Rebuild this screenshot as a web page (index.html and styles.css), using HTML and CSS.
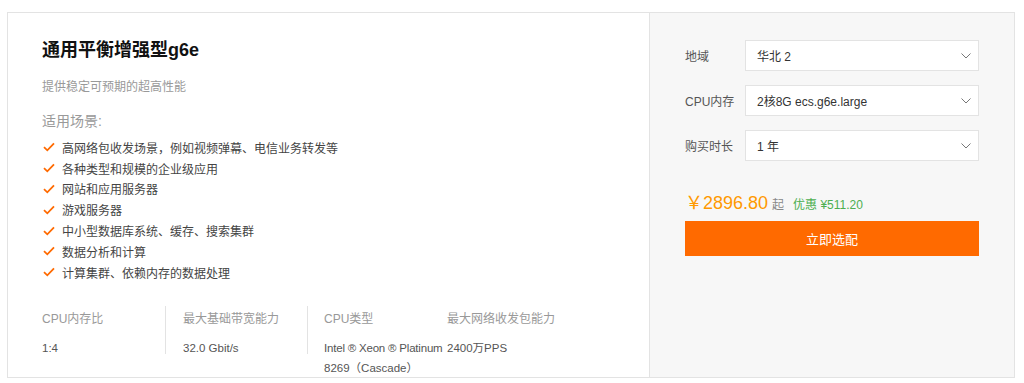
FILE: index.html
```html
<!DOCTYPE html>
<html lang="zh-CN">
<head>
<meta charset="utf-8">
<title>通用平衡增强型g6e</title>
<link rel="stylesheet" href="styles.css">
</head>
<body>
<div class="card">
  <div class="info">
    <h1 class="title">通用平衡增强型g6e</h1>
    <p class="subtitle">提供稳定可预期的超高性能</p>
    <p class="scene-title">适用场景:</p>
    <ul class="scenes">
      <li><svg class="check" viewBox="0 0 12 10"><path d="M1 5.2 L4.3 8.3 L11 1.4" /></svg>高网络包收发场景，例如视频弹幕、电信业务转发等</li>
      <li><svg class="check" viewBox="0 0 12 10"><path d="M1 5.2 L4.3 8.3 L11 1.4" /></svg>各种类型和规模的企业级应用</li>
      <li><svg class="check" viewBox="0 0 12 10"><path d="M1 5.2 L4.3 8.3 L11 1.4" /></svg>网站和应用服务器</li>
      <li><svg class="check" viewBox="0 0 12 10"><path d="M1 5.2 L4.3 8.3 L11 1.4" /></svg>游戏服务器</li>
      <li><svg class="check" viewBox="0 0 12 10"><path d="M1 5.2 L4.3 8.3 L11 1.4" /></svg>中小型数据库系统、缓存、搜索集群</li>
      <li><svg class="check" viewBox="0 0 12 10"><path d="M1 5.2 L4.3 8.3 L11 1.4" /></svg>数据分析和计算</li>
      <li><svg class="check" viewBox="0 0 12 10"><path d="M1 5.2 L4.3 8.3 L11 1.4" /></svg>计算集群、依赖内存的数据处理</li>
    </ul>
    <div class="specs">
      <div class="spec spec-1">
        <div class="spec-label">CPU内存比</div>
        <div class="spec-value">1:4</div>
      </div>
      <div class="spec spec-2">
        <div class="spec-label">最大基础带宽能力</div>
        <div class="spec-value">32.0 Gbit/s</div>
      </div>
      <div class="spec spec-3">
        <div class="spec-label">CPU类型</div>
        <div class="spec-value"><span class="nowrap">Intel ® Xeon ® Platinum</span> 8269（Cascade）</div>
      </div>
      <div class="spec spec-4">
        <div class="spec-label">最大网络收发包能力</div>
        <div class="spec-value">2400万PPS</div>
      </div>
    </div>
  </div>
  <div class="buy">
    <div class="field">
      <span class="field-label">地域</span>
      <div class="select"><span>华北 2</span><svg class="chev" viewBox="0 0 10 6"><path d="M0.5 0.5 L5 5 L9.5 0.5" /></svg></div>
    </div>
    <div class="field">
      <span class="field-label">CPU内存</span>
      <div class="select"><span>2核8G ecs.g6e.large</span><svg class="chev" viewBox="0 0 10 6"><path d="M0.5 0.5 L5 5 L9.5 0.5" /></svg></div>
    </div>
    <div class="field">
      <span class="field-label">购买时长</span>
      <div class="select"><span>1 年</span><svg class="chev" viewBox="0 0 10 6"><path d="M0.5 0.5 L5 5 L9.5 0.5" /></svg></div>
    </div>
    <div class="price-row">
      <span class="price">￥2896.80</span>
      <span class="qi">起</span>
      <span class="discount">优惠 ¥511.20</span>
    </div>
    <button class="btn" type="button">立即选配</button>
  </div>
</div>
</body>
</html>
```

FILE: styles.css
```css
* { box-sizing: border-box; }

body {
  margin: 0;
  background: #fff;
  font-family: "Liberation Sans", "Noto Sans CJK SC", sans-serif;
  color: #333;
}

.card {
  display: flex;
  margin: 12px 0 0 7px;
  width: 1008px;
  height: 366px;
  border: 1px solid #e3e3e3;
}

.info {
  width: 642px;
  border-right: 1px solid #e3e3e3;
  padding: 25px 0 0 34px;
  background: #fff;
}

.title {
  margin: 0;
  font-size: 18px;
  line-height: 24px;
  font-weight: bold;
  color: #111;
}

.subtitle {
  margin: 16px 0 0;
  font-size: 12px;
  line-height: 18px;
  color: #999;
}

.scene-title {
  margin: 15px 0 0;
  font-size: 14px;
  line-height: 20px;
  color: #999;
}

.scenes {
  list-style: none;
  margin: 6px 0 0;
  padding: 0;
}

.scenes li {
  display: flex;
  align-items: center;
  height: 20.8px;
  font-size: 12px;
  color: #444;
}

.check {
  width: 12px;
  height: 10px;
  margin: 0 7px 0 1px;
  fill: none;
  stroke: #ff6a00;
  stroke-width: 1.8;
}

.specs {
  display: flex;
  margin-top: 23px;
}

.spec {
  height: 48px;
  padding-top: 4px;
}

.spec-1 { width: 124px; border-right: 1px solid #e3e3e3; }
.spec-2 { width: 142px; padding-left: 17px; border-right: 1px solid #e3e3e3; }
.spec-3 { width: 139px; padding-left: 16px; }
.spec-4 { flex: 1; }

.spec-label {
  font-size: 12px;
  line-height: 18px;
  color: #999;
}

.spec-value {
  margin-top: 10px;
  font-size: 11.5px;
  line-height: 20px;
  color: #555;
}

.nowrap { white-space: nowrap; letter-spacing: -0.2px; }

.buy {
  flex: 1;
  background: #f7f7f7;
  padding: 27px 35px 0 35px;
}

.field {
  display: flex;
  align-items: center;
  margin-bottom: 14px;
}

.field-label {
  width: 60px;
  font-size: 12px;
  color: #555;
}

.select {
  flex: 1;
  height: 31px;
  background: #fff;
  border: 1px solid #e3e3e3;
  display: flex;
  align-items: center;
  justify-content: space-between;
  padding: 0 7px 0 11px;
  font-size: 12px;
  color: #333;
}

.chev {
  width: 10px;
  height: 6px;
  fill: none;
  stroke: #777;
  stroke-width: 1;
}

.price-row {
  margin-top: 27px;
  height: 24px;
  display: flex;
  align-items: baseline;
}

.price {
  font-size: 18px;
  color: #ff9900;
}

.qi {
  margin-left: 4px;
  font-size: 12px;
  color: #888;
}

.discount {
  margin-left: 9px;
  font-size: 12px;
  color: #4caf50;
}

.btn {
  display: block;
  width: 100%;
  height: 35px;
  margin-top: 9px;
  border: 0;
  background: #ff6a00;
  color: #fff;
  font-family: inherit;
  font-size: 13px;
  cursor: pointer;
}
```
